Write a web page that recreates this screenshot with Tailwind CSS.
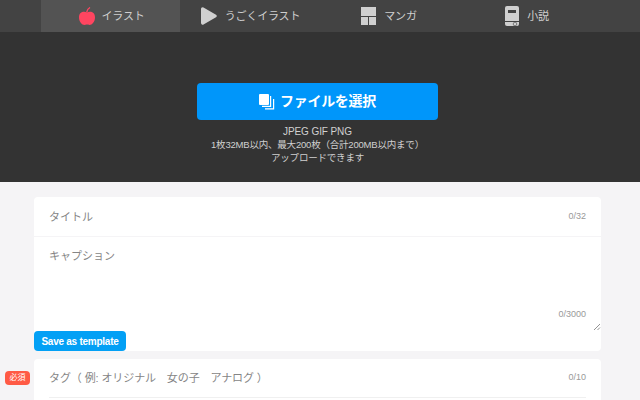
<!DOCTYPE html>
<html lang="ja">
<head>
  <meta charset="UTF-8" />
  <title>Upload</title>
  <script src="https://cdn.jsdelivr.net/npm/@tailwindcss/browser@4"></script>
</head>
<body class="bg-[#f5f4f6] h-[400px] w-[640px] overflow-hidden font-['Liberation_Sans','Noto_Sans_CJK_JP',sans-serif]">
  <!-- Header tabs -->
  <nav class="h-8 bg-[#434343] pl-[41px] flex text-[11px] tracking-[-0.2px] text-[#cfcfcf]">
    <a class="w-[139px] bg-[#535353] flex items-center justify-center gap-[7px] pl-[2px]">
      <svg width="16" height="18" viewBox="0 0 16 18"><path d="M8 5.500C5 4 0 4.600 0 10.500 0 14.800 3 18 5.500 18c1.100 0 1.600-.4 2.500-.4s1.400.4 2.500.4C13 18 16 14.800 16 10.500 16 4.600 11 4 8 5.500z" fill="#ff4560"/><path d="M7.600 5.500C8 3.500 9 1.500 11 .5" stroke="#ff4560" stroke-width="1.300" fill="none"/></svg>
      <span>イラスト</span>
    </a>
    <a class="w-[140px] flex items-center justify-center gap-[8px] pl-[1px]">
      <svg width="16" height="18" viewBox="0 0 16 18"><path d="M2.500.4 15 7.700a1.500 1.500 0 0 1 0 2.600L2.500 17.600A1.700 1.700 0 0 1 0 16.100V1.900A1.700 1.700 0 0 1 2.500.4z" fill="#d0d0d0"/></svg>
      <span>うごくイラスト</span>
    </a>
    <a class="w-[139px] flex items-center justify-center gap-[8px] pr-[1px]">
      <svg width="15" height="18" viewBox="0 0 15 18" fill="#d0d0d0"><rect width="15" height="9"/><rect y="10" width="7" height="8"/><rect x="8" y="10" width="7" height="8"/></svg>
      <span>マンガ</span>
    </a>
    <a class="w-[139px] flex items-center justify-center gap-[8px] pr-[3px]">
      <svg width="14" height="20" viewBox="0 0 14 20"><path d="M2 0h10a2 2 0 0 1 2 2v16a2 2 0 0 1-2 2H2a2 2 0 0 1-2-2V2a2 2 0 0 1 2-2z" fill="#d0d0d0"/><rect x="3" y="4" width="8" height="3" fill="#434343"/><path d="M0 15.500h14" stroke="#434343"/><circle cx="10" cy="18" r="1.800" fill="#d0d0d0" stroke="#434343" stroke-width=".6"/></svg>
      <span>小説</span>
    </a>
  </nav>

  <!-- Upload area -->
  <section class="h-[150px] bg-[#333333] flex flex-col items-center pt-[51px] pr-[5px]">
    <button class="w-[241px] h-[37px] bg-[#0096fa] rounded-[4px] text-white font-bold text-[14px] tracking-[-0.3px] flex items-center justify-center gap-[5px]">
      <svg width="16" height="16" viewBox="0 0 16 16" fill="#fff"><rect x="0" y="0" width="10" height="11" rx="1"/><path d="M11 2h1.200v11H3v-1.200h8zM14 5h1.200v10.500H6v-1.200h8z"/></svg>
      <span>ファイルを選択</span>
    </button>
    <div class="mt-[5px] text-[9.5px] tracking-[-0.2px] leading-[13px] text-[#d0d0d0] text-center">
      <p class="text-[10px] tracking-[-0.1px]">JPEG GIF PNG</p>
      <p>1枚32MB以内、最大200枚（合計200MB以内まで）</p>
      <p>アップロードできます</p>
    </div>
  </section>

  <!-- Form -->
  <main class="pt-[15px] pl-[34px] w-[601px]">
    <div class="bg-white rounded-[4px] h-[154px] relative">
      <div class="h-[40px] pt-[1px] border-b border-[#f5f4f6] flex items-center justify-between pl-[15px] pr-[15px]">
        <span class="text-[11px] text-[#858585]">タイトル</span>
        <span class="text-[9px] text-[#999999]">0/32</span>
      </div>
      <div class="pl-[15px] pt-[11px] text-[11px] text-[#858585]">キャプション</div>
      <span class="absolute right-[15px] top-[111px] text-[9px] text-[#999999]">0/3000</span>
      <svg class="absolute right-0 top-[126px]" width="8" height="8" viewBox="0 0 8 8" stroke="#777" stroke-width=".8"><path d="M1 7 7 1M4.500 7 7 4.500"/></svg>
      <button class="absolute left-0 bottom-0 h-[20px] w-[92px] bg-[#03a0f5] rounded-[4px] text-white text-[10px] tracking-[-0.25px] font-bold flex items-center justify-center">Save as template</button>
    </div>
    <div class="bg-white rounded-t-[4px] h-[60px] mt-2 relative">
      <span class="absolute left-[-29px] top-[12px] w-[25px] h-[14px] bg-[#ff5a45] rounded-[4px] text-white text-[8px] flex items-center justify-center">必須</span>
      <div class="h-[39px] ml-[15px] mr-[15px] border-b border-[#f0f0f0] flex items-center justify-between">
        <span class="text-[11px] tracking-[-0.1px] text-[#858585]">タグ（ 例: オリジナル　女の子　アナログ ）</span>
        <span class="text-[9px] text-[#999999]">0/10</span>
      </div>
    </div>
  </main>
</body>
</html>
